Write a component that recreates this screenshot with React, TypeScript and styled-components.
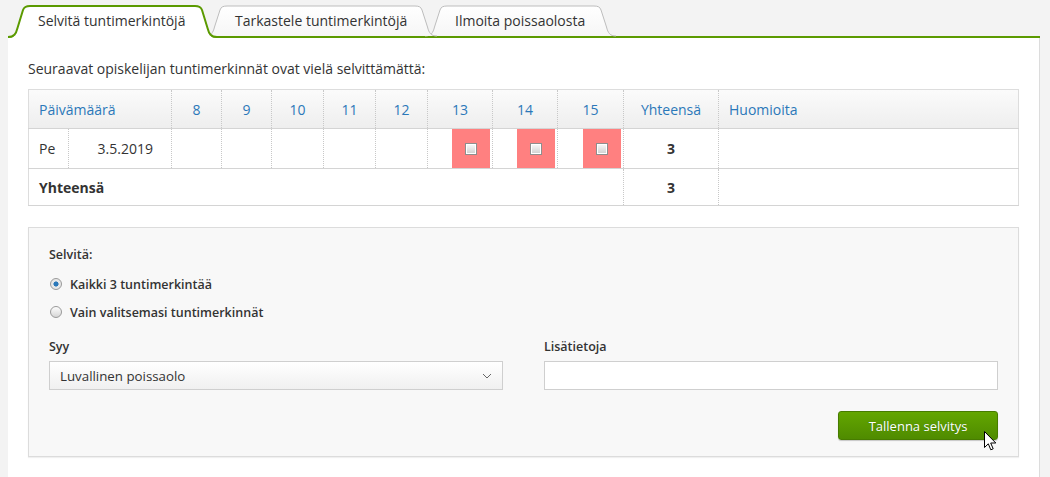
import React, { useState } from "react";
import styled, { createGlobalStyle } from "styled-components";

const GlobalStyle = createGlobalStyle`
  html, body {
    margin: 0;
    padding: 0;
    background: #f3f3f3;
    font-family: "Open Sans", "Liberation Sans", sans-serif;
    font-size: 14px;
    color: #333;
  }
`;

const Page = styled.div`
  padding: 0 10px 0 8px;
  height: 477px;
  overflow: hidden;
`;

const TabBar = styled.div`
  display: flex;
  align-items: flex-end;
  height: 36px;
  border-bottom: 2px solid #5b9a00;
`;

const Tab = styled.div<{ $active?: boolean; $z: number; $w: number }>`
  position: relative;
  z-index: ${(p) => p.$z};
  flex: 0 0 ${(p) => p.$w}px;
  box-sizing: border-box;
  height: ${(p) => (p.$active ? 32 : 30)}px;
  margin-bottom: ${(p) => (p.$active ? -2 : 0)}px;
  margin-left: -12px;
  padding-left: 30px;
  line-height: 30px;
  color: #333;
  white-space: nowrap;
  cursor: pointer;
  &:first-child {
    margin-left: 0;
  }
`;

const TabShape = styled.svg`
  position: absolute;
  inset: 0;
  width: 100%;
  height: 100%;
  z-index: -1;
  overflow: visible;
`;

const TabLabel = styled.span`
  position: relative;
`;

const Panel = styled.div`
  background: #fff;
  border-right: 1px solid #dcdcdc;
  padding: 21px 20px 30px;
  height: 440px;
  box-sizing: border-box;
`;

const Intro = styled.p`
  margin: 0 0 10px;
  line-height: 20px;
`;

const Table = styled.table`
  width: 990px;
  border-collapse: collapse;
  table-layout: fixed;
  border: 1px solid #dddddd;
`;

const HeadRow = styled.tr`
  height: 39px;
  background: linear-gradient(#fbfbfb, #eeeeee);
  border-bottom: 1px solid #d4d4d4;
`;

const Row = styled.tr<{ $h: number }>`
  height: ${(p) => p.$h}px;
  border-bottom: 1px solid #d4d4d4;
`;

const Th = styled.th<{ $align?: string }>`
  font-weight: 400;
  color: #2b78b9;
  text-align: ${(p) => p.$align || "center"};
  padding: 0 10px;
  border-left: 1px dotted #c8c8c8;
  &:first-child {
    border-left: none;
  }
`;

const Td = styled.td<{ $align?: string; $bold?: boolean; $pad?: number }>`
  padding: 0 ${(p) => (p.$pad ?? 10)}px;
  text-align: ${(p) => p.$align || "left"};
  font-weight: ${(p) => (p.$bold ? 700 : 400)};
  border-left: 1px dotted #c8c8c8;
  &:first-child {
    border-left: none;
  }
`;

const HourCell = styled.td`
  padding: 0;
  height: 39px;
  border-left: 1px dotted #c8c8c8;
`;

const HourInner = styled.div`
  display: flex;
  justify-content: flex-end;
  height: 39px;
  padding-right: 2px;
`;

const Marked = styled.div`
  width: 38px;
  height: 100%;
  background: #ff8080;
  display: flex;
  align-items: center;
  justify-content: center;
`;

const Check = styled.span`
  width: 10px;
  height: 10px;
  border: 1px solid #8e8e8e;
  background: linear-gradient(#fafafa, #cfcfcf);
  box-shadow: inset 0 0 0 1px #fff;
`;

const Form = styled.div`
  margin-top: 21px;
  background: #f8f8f8;
  border: 1px solid #dcdcdc;
  box-shadow: 0 1px 1px rgba(0, 0, 0, 0.06);
  padding: 18px 20px 16px;
`;

const Label = styled.div`
  font-weight: 600;
  font-size: 12.5px;
  line-height: 18px;
  color: #333;
`;

const RadioRow = styled.label`
  display: flex;
  align-items: center;
  gap: 8px;
  height: 20px;
  margin-top: 9px;
  font-weight: 600;
  font-size: 12.5px;
  cursor: pointer;
  &:first-of-type {
    margin-top: 10px;
  }
  & + & {
    margin-top: 8px;
  }
`;

const RadioDot = styled.span<{ $on: boolean }>`
  width: 10px;
  height: 10px;
  border-radius: 50%;
  border: 1px solid #9a9a9a;
  margin-left: 1px;
  background: ${(p) =>
    p.$on
      ? "radial-gradient(circle, #2b78b9 0 2.3px, #e8e8e8 2.8px)"
      : "linear-gradient(#fdfdfd, #d6d6d6)"};
`;

const Fields = styled.div`
  display: grid;
  grid-template-columns: 1fr 1fr;
  column-gap: 41px;
  margin-top: 16px;
`;

const Field = styled.div`
  display: flex;
  flex-direction: column;
  gap: 5px;
`;

const SelectBox = styled.div`
  height: 29px;
  box-sizing: border-box;
  border: 1px solid #cfcfcf;
  background: linear-gradient(#ffffff, #f0f0f0);
  display: flex;
  align-items: center;
  justify-content: space-between;
  padding: 0 10px 0 10px;
  font-size: 13.3px;
`;

const Input = styled.input`
  height: 29px;
  box-sizing: border-box;
  border: 1px solid #cfcfcf;
  background: #fff;
  font: inherit;
  padding: 0 8px;
  outline: none;
`;

const Actions = styled.div`
  display: flex;
  justify-content: flex-end;
  margin-top: 21px;
`;

const ButtonWrap = styled.div`
  position: relative;
  height: 29px;
`;

const Button = styled.button`
  display: block;
  width: 160px;
  height: 29px;
  border: 1px solid #477c00;
  border-radius: 3px;
  background: linear-gradient(#63a600, #4f8b00);
  color: #fff;
  font-family: inherit;
  font-size: 13px;
  text-shadow: 0 0 1px rgba(0, 60, 0, 0.4);
  box-shadow: 0 1px 1px rgba(0, 0, 0, 0.2);
  cursor: pointer;
`;

const Cursor = styled.svg`
  position: absolute;
  left: 146px;
  top: 20px;
  pointer-events: none;
`;

const tabs = [
  { label: "Selvitä tuntimerkintöjä", w: 209 },
  { label: "Tarkastele tuntimerkintöjä", w: 232 },
  { label: "Ilmoita poissaolosta", w: 191 },
];

// tab outline: curved slanted sides, open at the bottom
function tabD(w: number, h: number) {
  return `M0,${h} C6,${h} 8,${h - 3} 9.5,${h - 9} L15,4 C16,1 18,0 22,0 L${w - 22},0 C${w - 18},0 ${w - 16},1 ${w - 15},4 L${w - 9.5},${h - 9} C${w - 8},${h - 3} ${w - 6},${h} ${w},${h}`;
}

const hours = [8, 9, 10, 11, 12, 13, 14, 15];
const marked = [13, 14, 15];
const colW = [40, 103, 50, 50, 52, 52, 52, 65, 65, 66, 95, 300];

export default function App() {
  const [choice, setChoice] = useState(0);
  const [active, setActive] = useState(0);

  return (
    <Page>
      <GlobalStyle />
      <TabBar>
        {tabs.map((t, i) => {
          const on = i === active;
          const h = on ? 32 : 30;
          return (
            <Tab key={t.label} $w={t.w} $active={on} $z={on ? 10 : 5 - i} onClick={() => setActive(i)}>
              <TabShape viewBox={`0 0 ${t.w} ${h}`}>
                {on ? (
                  <>
                    <path d={tabD(t.w, h) + " Z"} fill="#fff" />
                    <path d={tabD(t.w, h - 1)} fill="none" stroke="#5b9a00" strokeWidth="2" />
                  </>
                ) : (
                  <>
                    <defs>
                      <linearGradient id={`tg${i}`} x1="0" y1="0" x2="0" y2="1">
                        <stop offset="0" stopColor="#ffffff" />
                        <stop offset="1" stopColor="#f6f6f6" />
                      </linearGradient>
                    </defs>
                    <path d={tabD(t.w, h) + " Z"} fill={`url(#tg${i})`} />
                    <path d={tabD(t.w, h)} fill="none" stroke="#bdbdbd" strokeWidth="1" />
                  </>
                )}
              </TabShape>
              <TabLabel>{t.label}</TabLabel>
            </Tab>
          );
        })}
      </TabBar>
      <Panel>
        <Intro>Seuraavat opiskelijan tuntimerkinnät ovat vielä selvittämättä:</Intro>
        <Table>
          <colgroup>
            {colW.map((w, i) => (
              <col key={i} style={{ width: w }} />
            ))}
          </colgroup>
          <thead>
            <HeadRow>
              <Th colSpan={2} $align="left">
                Päivämäärä
              </Th>
              {hours.map((h) => (
                <Th key={h}>{h}</Th>
              ))}
              <Th>Yhteensä</Th>
              <Th $align="left">Huomioita</Th>
            </HeadRow>
          </thead>
          <tbody>
            <Row $h={39}>
              <Td>Pe</Td>
              <Td $align="right" $pad={18}>
                3.5.2019
              </Td>
              {hours.map((h) => (
                <HourCell key={h}>
                  {marked.includes(h) && (
                    <HourInner>
                      <Marked>
                        <Check />
                      </Marked>
                    </HourInner>
                  )}
                </HourCell>
              ))}
              <Td $align="center" $bold>
                3
              </Td>
              <Td />
            </Row>
            <Row $h={37}>
              <Td colSpan={10} $bold>
                Yhteensä
              </Td>
              <Td $align="center" $bold>
                3
              </Td>
              <Td />
            </Row>
          </tbody>
        </Table>

        <Form>
          <Label>Selvitä:</Label>
          <RadioRow onClick={() => setChoice(0)}>
            <RadioDot $on={choice === 0} />
            Kaikki 3 tuntimerkintää
          </RadioRow>
          <RadioRow onClick={() => setChoice(1)}>
            <RadioDot $on={choice === 1} />
            Vain valitsemasi tuntimerkinnät
          </RadioRow>
          <Fields>
            <Field>
              <Label>Syy</Label>
              <SelectBox>
                <span>Luvallinen poissaolo</span>
                <svg width="10" height="6" viewBox="0 0 10 6">
                  <path d="M1 1 L5 5 L9 1" fill="none" stroke="#666" strokeWidth="1" />
                </svg>
              </SelectBox>
            </Field>
            <Field>
              <Label>Lisätietoja</Label>
              <Input />
            </Field>
          </Fields>
          <Actions>
            <ButtonWrap>
              <Button>Tallenna selvitys</Button>
              <Cursor width="13" height="21" viewBox="0 0 13 21">
                <path
                  d="M0.5 0.5 L0.5 16.5 L4.3 12.8 L6.8 18.8 L9.2 17.8 L6.7 12 L11.8 12 Z"
                  fill="#fff"
                  stroke="#000"
                  strokeWidth="1"
                />
              </Cursor>
            </ButtonWrap>
          </Actions>
        </Form>
      </Panel>
    </Page>
  );
}
